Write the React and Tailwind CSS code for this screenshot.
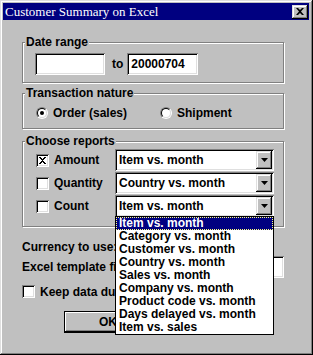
import React from 'react';

const sans = { fontFamily: '"Liberation Sans", Arial, sans-serif' };

const reportOptions = [
  'Item vs. month',
  'Category vs. month',
  'Customer vs. month',
  'Country vs. month',
  'Sales vs. month',
  'Company vs. month',
  'Product code vs. month',
  'Days delayed vs. month',
  'Item vs. sales',
];

const sunken =
  'shadow-[inset_1px_1px_0_#808080,inset_-1px_-1px_0_#fff,inset_2px_2px_0_#000,inset_-2px_-2px_0_#dfdfdf]';
const raised =
  'shadow-[inset_-1px_-1px_0_#000,inset_1px_1px_0_#dfdfdf,inset_-2px_-2px_0_#808080,inset_2px_2px_0_#fff]';

function GroupBox({ label, className, children }) {
  return (
    <div
      className={`w-[262px] border border-[#808080] shadow-[inset_1px_1px_0_#fff,1px_1px_0_#fff] ${className}`}
    >
      <div className="-mt-[8px] ml-[2px] w-fit bg-[#c0c0c0] px-[1px] leading-[14px]">{label}</div>
      {children}
    </div>
  );
}

function Checkbox({ checked }) {
  return (
    <span className={`flex h-[13px] w-[13px] shrink-0 items-center justify-center bg-white ${sunken}`}>
      {checked && (
        <svg width="7" height="7" viewBox="0 0 7 7">
          <path d="M0 0h2v1h1v1h1V1h1V0h2v1H6v1H5v1H4v1h1v1h1v1h1v1H5V6H4V5H3v1H2v1H0V6h1V5h1V4h1V3H2V2H1V1H0z" fill="#000" />
        </svg>
      )}
    </span>
  );
}

function Radio({ checked }) {
  return (
    <span className="flex h-[12px] w-[12px] shrink-0 items-center justify-center rounded-full border border-[#808080] border-r-white border-b-white">
      <span className="flex h-[10px] w-[10px] items-center justify-center rounded-full border border-black border-r-[#dfdfdf] border-b-[#dfdfdf] bg-white">
        {checked && <span className="h-[4px] w-[4px] rounded-full bg-black" />}
      </span>
    </span>
  );
}

function Combo({ value, open }) {
  return (
    <div className={`relative flex h-[22px] w-[159px] items-center bg-white p-[2px] ${sunken}`}>
      <span className="flex-1 pl-[2px] leading-[14px]">{value}</span>
      <span className={`flex h-[18px] w-[16px] items-center justify-center bg-[#c0c0c0] ${raised}`}>
        <svg width="7" height="4" viewBox="0 0 7 4">
          <path d="M0 0h7L3.5 4z" fill="#000" />
        </svg>
      </span>
      {open && (
        <div className="absolute left-0 top-[21px] z-10 w-[159px] border border-black bg-white">
          {reportOptions.map((opt, i) => (
            <div
              key={opt}
              className={`h-[13px] pl-[3px] leading-[13px] ${
                i === 0 ? 'bg-[#000080] text-white outline outline-1 -outline-offset-1 outline-dotted outline-[#ffff80]' : 'text-black'
              }`}
            >
              {opt}
            </div>
          ))}
        </div>
      )}
    </div>
  );
}

export default function App() {
  const reports = [
    { name: 'Amount', checked: true, value: 'Item vs. month' },
    { name: 'Quantity', checked: false, value: 'Country vs. month' },
    { name: 'Count', checked: false, value: 'Item vs. month', open: true },
  ];

  return (
    <div
      className="h-[355px] w-[313px] overflow-hidden bg-[#c0c0c0] p-[3px] pr-[4px] text-[12px] font-bold text-black shadow-[inset_-1px_-1px_0_#000,inset_1px_1px_0_#dfdfdf,inset_-2px_-2px_0_#808080,inset_2px_2px_0_#fff]"
      style={sans}
    >
      {/* title bar */}
      <div className="flex h-[17px] items-center justify-between bg-[#000080] pl-[2px]">
        <span
          className="text-[13px] font-normal leading-[17px] text-white"
          style={{ fontFamily: '"Liberation Serif", "Times New Roman", serif' }}
        >
          Customer Summary on Excel
        </span>
        <span className={`mr-[1px] flex h-[14px] w-[16px] items-center justify-center bg-[#c0c0c0] ${raised}`}>
          <svg width="8" height="7" viewBox="0 0 8 7">
            <path d="M0 0h2l2 2 2-2h2L5 3.5 8 7H6L4 5 2 7H0l3-3.5z" fill="#000" />
          </svg>
        </span>
      </div>

      <div className="flex flex-col pl-[19px]">
        <GroupBox label="Date range" className="mt-[22px] h-[41px]">
          <div className="ml-[12px] mt-[4px] flex items-center">
            <div className={`h-[22px] w-[70px] bg-white ${sunken}`} />
            <span className="ml-[7px] leading-[14px]">to</span>
            <div className={`ml-[4px] flex h-[22px] w-[71px] items-center bg-white pl-[4px] ${sunken}`}>
              20000704
            </div>
          </div>
        </GroupBox>

        <GroupBox label="Transaction nature" className="mt-[10px] h-[36px]">
          <div className="ml-[13px] mt-[6px] flex h-[14px] items-center">
            <div className="flex w-[124px] items-center">
              <Radio checked />
              <span className="ml-[5px]">Order (sales)</span>
            </div>
            <Radio />
            <span className="ml-[5px]">Shipment</span>
          </div>
        </GroupBox>

        <GroupBox label="Choose reports" className="relative z-10 mt-[12px] h-[86px]">
          <div className="mt-[1px] flex flex-col gap-[1px]">
            {reports.map((r) => (
              <div key={r.name} className="flex h-[22px] items-center">
                <div className="ml-[13px] flex w-[79px] items-center">
                  <Checkbox checked={r.checked} />
                  <span className="ml-[5px]">{r.name}</span>
                </div>
                <Combo value={r.value} open={r.open} />
              </div>
            ))}
          </div>
        </GroupBox>

        <div className="mt-[13px] flex h-[14px] items-center whitespace-nowrap">Currency to use:</div>

        <div className="mt-[2px] flex h-[22px] w-[262px] items-center">
          <span className="w-[98px] shrink-0 whitespace-nowrap">Excel template file:</span>
          <div className={`h-[22px] w-[164px] shrink-0 bg-white ${sunken}`} />
        </div>

        <div className="mt-[7px] flex h-[13px] items-center whitespace-nowrap">
          <Checkbox />
          <span className="ml-[5px]">Keep data during session</span>
        </div>

        <div className="ml-[42px] mt-[13px] flex h-[22px] w-[88px] items-center justify-center border border-black bg-[#c0c0c0] shadow-[inset_-1px_-1px_0_#000,inset_1px_1px_0_#fff,inset_-2px_-2px_0_#808080]">
          OK
        </div>
      </div>
    </div>
  );
}
